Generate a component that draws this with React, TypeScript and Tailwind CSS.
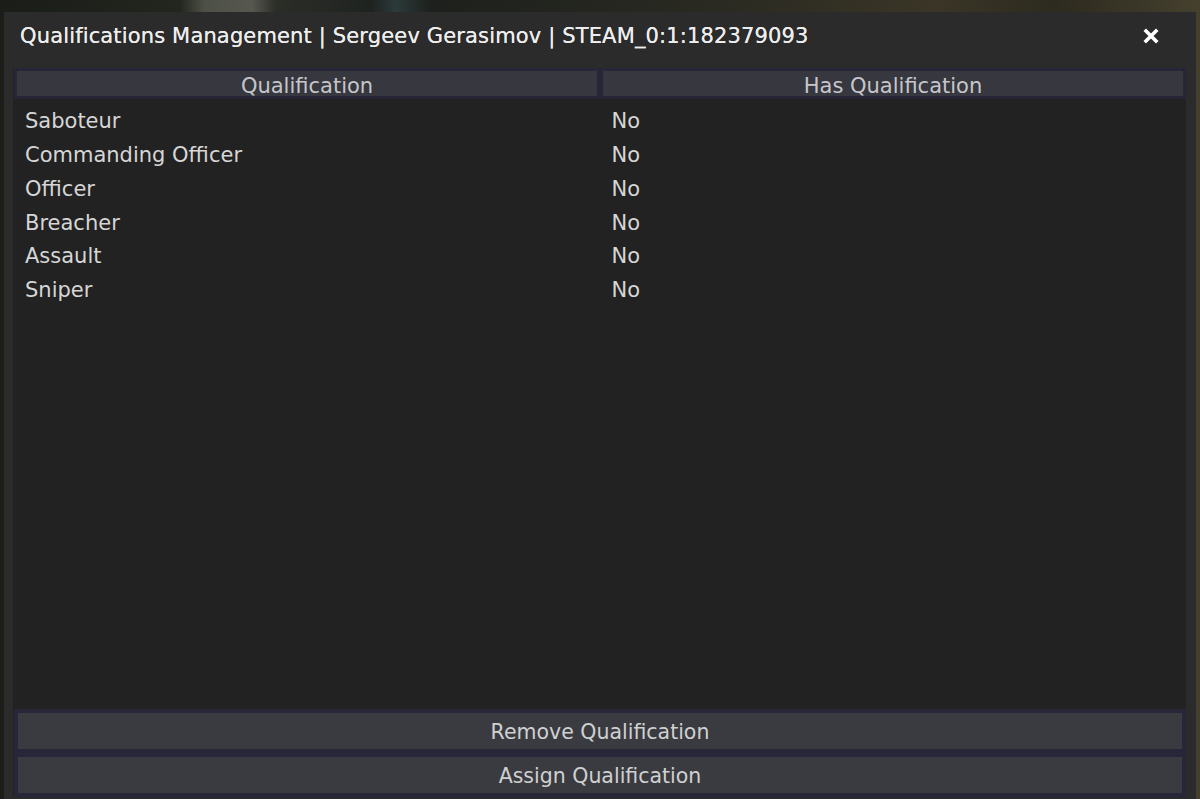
import React from 'react'

const quals = ['Saboteur', 'Commanding Officer', 'Officer', 'Breacher', 'Assault', 'Sniper']

const font = { fontFamily: '"DejaVu Sans", Verdana, sans-serif' }

function CloseIcon() {
  return (
    <svg width="16" height="16" viewBox="0 0 16 16" className="block">
      <path d="M3 3 L13 13 M13 3 L3 13" stroke="#ffffff" strokeWidth="3.6" strokeLinecap="square" />
    </svg>
  )
}

export default function App() {
  return (
    <div
      className="w-full h-[799px] overflow-hidden bg-[linear-gradient(90deg,#1a1d18_0%,#22261e_15%,#4d5047_17%,#565850_21%,#2b2d27_23%,#1f2320_31%,#2b3a3a_33%,#1d201c_36%,#2a2a22_60%,#3a3526_78%,#2d2a1f_88%,#45402e_100%)] pt-[12px] pl-[4px]"
      style={font}
    >
      <div className="w-[1192px] h-[787px] bg-[#2b2b2b] flex flex-col">
        {/* title bar */}
        <div className="h-[56px] shrink-0 flex items-center justify-between pl-[16px] pr-[37px] pb-[6px]">
          <span className="text-[21px] text-[#ededed] tracking-[0.15px] [text-shadow:0_0_0.4px_#ededed]">
            Qualifications Management | Sergeev Gerasimov | STEAM_0:1:182379093
          </span>
          <div className="-mt-[3px]">
            <CloseIcon />
          </div>
        </div>

        {/* list panel */}
        <div className="flex-1 ml-[9px] mr-[10px] mb-[2px] bg-[#222222] flex flex-col pl-[1px]">
          <div className="flex h-[31px] shrink-0">
            <div className="flex-1 border-[3px] border-[#272638] bg-[#37373f] flex items-center justify-center pt-[6px] text-[21px] leading-none text-[#c6c6ca]">
              Qualification
            </div>
            <div className="flex-1 border-[3px] border-[#272638] bg-[#37373f] flex items-center justify-center pt-[6px] text-[21px] leading-none text-[#c6c6ca]">
              Has Qualification
            </div>
          </div>

          <div className="flex-1 pt-[6px]">
            {quals.map((q) => (
              <div key={q} className="flex h-[33.8px] items-center text-[21px] text-[#d6d6d6]">
                <div className="flex-1 pl-[11px]">{q}</div>
                <div className="flex-1 pl-[12px]">No</div>
              </div>
            ))}
          </div>

          <button className="h-[44px] shrink-0 border-[4px] border-[#28273a] bg-[#3a3b41] pt-[3px] text-[20.5px] text-[#d0d0d0] flex items-center justify-center">
            Remove Qualification
          </button>
          <button className="h-[44px] shrink-0 border-[4px] border-[#28273a] bg-[#3a3b41] pt-[3px] text-[20.5px] text-[#d0d0d0] flex items-center justify-center">
            Assign Qualification
          </button>
        </div>
      </div>
    </div>
  )
}
